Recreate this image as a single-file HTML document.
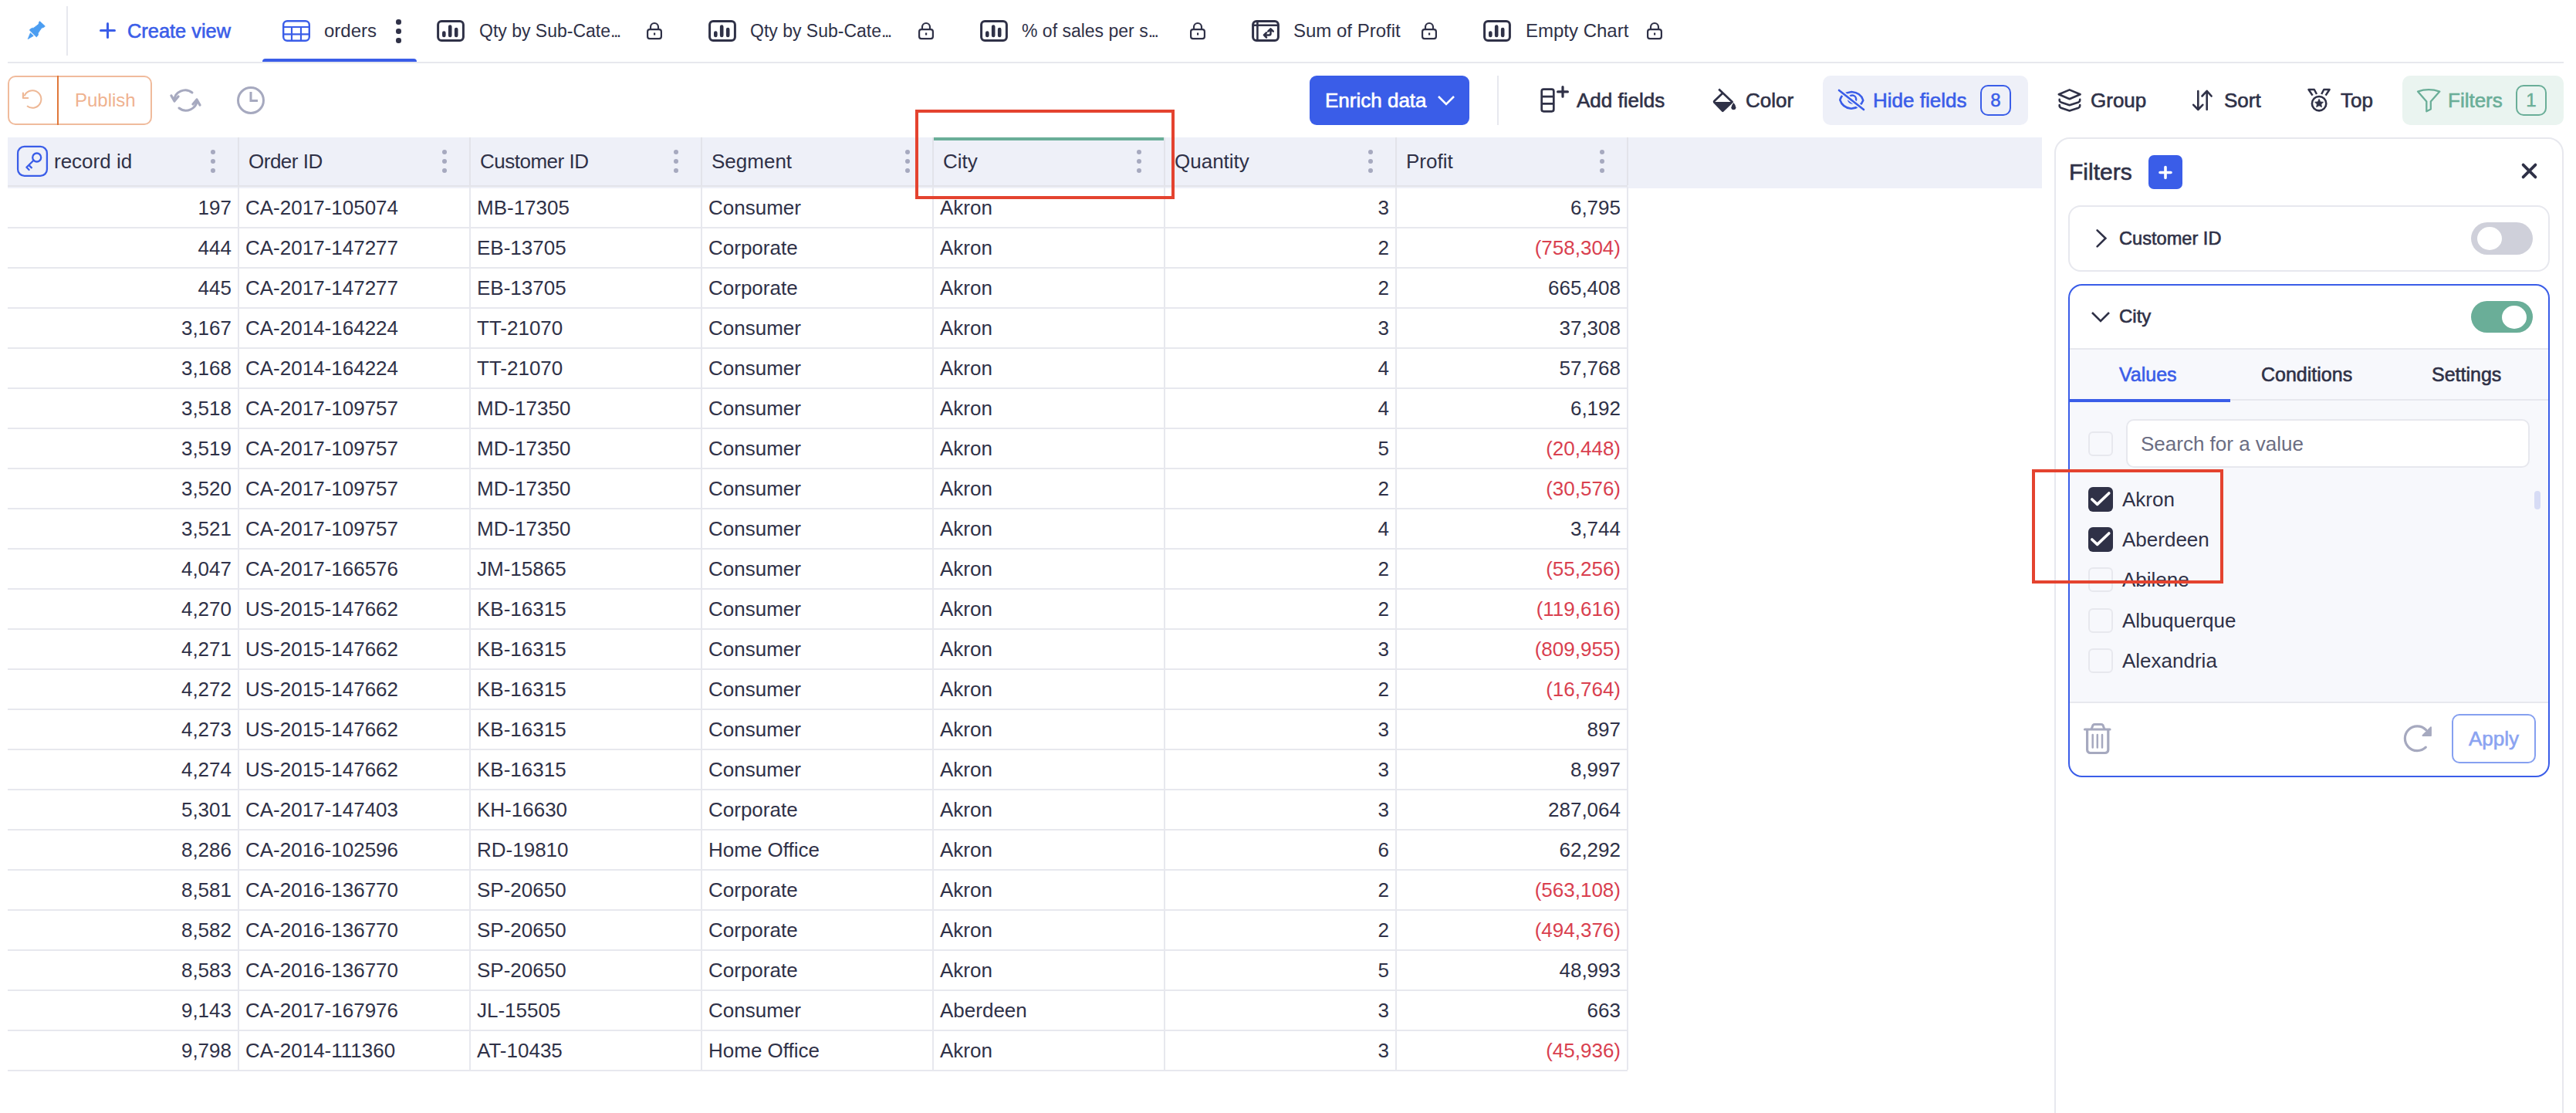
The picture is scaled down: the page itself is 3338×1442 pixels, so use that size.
<!DOCTYPE html>
<html><head><meta charset="utf-8"><title>orders</title><style>
*{margin:0;padding:0;box-sizing:border-box}
html,body{width:3338px;height:1442px;overflow:hidden;background:#fff;font-family:"Liberation Sans",sans-serif;color:#2f3147}
.a{position:absolute}
.t{position:absolute;white-space:nowrap;line-height:40px}
.med{-webkit-text-stroke:0.6px currentColor}
.hl{position:absolute;background:#e7e8ee}
.cell{position:absolute;white-space:nowrap;font-size:26px;line-height:52px;height:52px}
.r{text-align:right}
.dots{position:absolute;width:6px}
.dots i{position:absolute;left:0;width:6px;height:6px;border-radius:50%;background:#a6a9bf}
</style></head>
<body>
<svg class="a" style="left:25px;top:20px" width="45" height="40" viewBox="25 20 45 40">
<path d="M51.6 27.7 L58.3 33.85 Q57.5 35.5 55.6 35.8 Q53.8 36.2 53.4 36.9 L49.8 42.3 Q49 44 49.5 45.2 L47.3 47.9 L38.3 39.1 Q39.5 37.2 40.5 36.9 Q42.5 36 43.7 36.2 L49.8 31.5 Q50.8 30 50.5 28.6 Z" fill="#4b9df1" stroke="#4b9df1" stroke-width="0.8" stroke-linejoin="round"/>
<path d="M39.4 42.7 L43.3 46.4 L36.2 50.6 Z" fill="#4b9df1" stroke="#4b9df1" stroke-width="0.8" stroke-linejoin="round"/></svg>
<div class="a" style="left:86px;top:8px;width:2px;height:64px;background:#e7e8ee"></div>
<div class="a" style="left:129px;top:38px;width:21px;height:3px;background:#3a5de8;border-radius:2px"></div>
<div class="a" style="left:138px;top:29px;width:3px;height:21px;background:#3a5de8;border-radius:2px"></div>
<div class="t med" style="left:165px;top:20px;font-size:25.4px;color:#3a5de8">Create view</div>
<svg class="a" style="left:366px;top:26px" width="36" height="28" viewBox="0 0 36 28">
<rect x="1.2" y="1.2" width="33.6" height="25.6" rx="5" fill="none" stroke="#3a5de8" stroke-width="2.4"/>
<path d="M1.2 9 H34.8 M1.2 18.4 H34.8 M12 9 V27 M24 9 V27" stroke="#3a5de8" stroke-width="2.2"/></svg>
<div class="t" style="left:420px;top:20px;font-size:24px">orders</div>
<div class="a" style="left:513px;top:25px;width:7px;height:30px"><i class="a" style="left:0;top:0;width:6.5px;height:6.5px;border-radius:50%;background:#2f3147"></i><i class="a" style="left:0;top:12px;width:6.5px;height:6.5px;border-radius:50%;background:#2f3147"></i><i class="a" style="left:0;top:24px;width:6.5px;height:6.5px;border-radius:50%;background:#2f3147"></i></div>
<div class="a" style="left:340px;top:76px;width:200px;height:5px;background:#3a5de8;border-radius:4px 4px 0 0"></div>
<svg class="a" style="left:565px;top:25px" width="38" height="30" viewBox="0 0 38 30"><rect x="2.6" y="2.6" width="32.8" height="25" rx="4.5" fill="none" stroke="#2f3147" stroke-width="3"/><path d="M10.3 17.5 V21 M18.2 9.5 V21 M26.2 13 V21" stroke="#2f3147" stroke-width="4.6" stroke-linecap="round"/></svg>
<div class="t" style="left:621px;top:20px;font-size:23px">Qty by Sub-Cate<span style="letter-spacing:-2.5px">...</span></div>
<svg class="a" style="left:837px;top:28px" width="22" height="24" viewBox="0 0 22 24"><path d="M6 10 V7 a5 5 0 0 1 10 0 V10" fill="none" stroke="#2f3147" stroke-width="2.2"/><rect x="2.1" y="10.1" width="17.8" height="12" rx="2.8" fill="none" stroke="#2f3147" stroke-width="2.2"/><rect x="10" y="14.5" width="2.2" height="3" fill="#2f3147"/></svg>
<svg class="a" style="left:917px;top:25px" width="38" height="30" viewBox="0 0 38 30"><rect x="2.6" y="2.6" width="32.8" height="25" rx="4.5" fill="none" stroke="#2f3147" stroke-width="3"/><path d="M10.3 17.5 V21 M18.2 9.5 V21 M26.2 13 V21" stroke="#2f3147" stroke-width="4.6" stroke-linecap="round"/></svg>
<div class="t" style="left:972px;top:20px;font-size:23px">Qty by Sub-Cate<span style="letter-spacing:-2.5px">...</span></div>
<svg class="a" style="left:1189px;top:28px" width="22" height="24" viewBox="0 0 22 24"><path d="M6 10 V7 a5 5 0 0 1 10 0 V10" fill="none" stroke="#2f3147" stroke-width="2.2"/><rect x="2.1" y="10.1" width="17.8" height="12" rx="2.8" fill="none" stroke="#2f3147" stroke-width="2.2"/><rect x="10" y="14.5" width="2.2" height="3" fill="#2f3147"/></svg>
<svg class="a" style="left:1269px;top:25px" width="38" height="30" viewBox="0 0 38 30"><rect x="2.6" y="2.6" width="32.8" height="25" rx="4.5" fill="none" stroke="#2f3147" stroke-width="3"/><path d="M10.3 17.5 V21 M18.2 9.5 V21 M26.2 13 V21" stroke="#2f3147" stroke-width="4.6" stroke-linecap="round"/></svg>
<div class="t" style="left:1324px;top:20px;font-size:23px">% of sales per s<span style="letter-spacing:-2.5px">...</span></div>
<svg class="a" style="left:1541px;top:28px" width="22" height="24" viewBox="0 0 22 24"><path d="M6 10 V7 a5 5 0 0 1 10 0 V10" fill="none" stroke="#2f3147" stroke-width="2.2"/><rect x="2.1" y="10.1" width="17.8" height="12" rx="2.8" fill="none" stroke="#2f3147" stroke-width="2.2"/><rect x="10" y="14.5" width="2.2" height="3" fill="#2f3147"/></svg>
<svg class="a" style="left:1621px;top:25px" width="38" height="30" viewBox="0 0 38 30"><rect x="2.6" y="2.6" width="32.8" height="25" rx="4.5" fill="none" stroke="#2f3147" stroke-width="3"/><path d="M2.6 7.8 H35.4 M8.4 2.6 V27.6" stroke="#2f3147" stroke-width="2.6"/><path d="M25.5 12.8 V18.4 Q25.5 20.4 23.5 20.4 H17.2 M22.2 15.6 L25.5 12.3 L28.8 15.6 M20 17.3 L16.9 20.4 L20 23.5" stroke="#2f3147" stroke-width="2.5" fill="none" stroke-linecap="round" stroke-linejoin="round"/></svg>
<div class="t" style="left:1676px;top:20px;font-size:24px">Sum of Profit</div>
<svg class="a" style="left:1841px;top:28px" width="22" height="24" viewBox="0 0 22 24"><path d="M6 10 V7 a5 5 0 0 1 10 0 V10" fill="none" stroke="#2f3147" stroke-width="2.2"/><rect x="2.1" y="10.1" width="17.8" height="12" rx="2.8" fill="none" stroke="#2f3147" stroke-width="2.2"/><rect x="10" y="14.5" width="2.2" height="3" fill="#2f3147"/></svg>
<svg class="a" style="left:1921px;top:25px" width="38" height="30" viewBox="0 0 38 30"><rect x="2.6" y="2.6" width="32.8" height="25" rx="4.5" fill="none" stroke="#2f3147" stroke-width="3"/><path d="M10.3 17.5 V21 M18.2 9.5 V21 M26.2 13 V21" stroke="#2f3147" stroke-width="4.6" stroke-linecap="round"/></svg>
<div class="t" style="left:1977px;top:20px;font-size:24px">Empty Chart</div>
<svg class="a" style="left:2133px;top:28px" width="22" height="24" viewBox="0 0 22 24"><path d="M6 10 V7 a5 5 0 0 1 10 0 V10" fill="none" stroke="#2f3147" stroke-width="2.2"/><rect x="2.1" y="10.1" width="17.8" height="12" rx="2.8" fill="none" stroke="#2f3147" stroke-width="2.2"/><rect x="10" y="14.5" width="2.2" height="3" fill="#2f3147"/></svg>
<div class="a" style="left:10px;top:80px;width:3312px;height:2px;background:#e7e8ee"></div>
<div class="a" style="left:10px;top:98px;width:187px;height:64px;border:2px solid #f0bb9c;border-radius:10px"></div>
<div class="a" style="left:74px;top:98px;width:2px;height:64px;background:#e0783a"></div>
<svg class="a" style="left:20px;top:105px" width="50" height="50" viewBox="20 105 50 50">
<path d="M35 137.3 A11.3 11.3 0 1 0 31.5 124.5" fill="none" stroke="#eeb896" stroke-width="2"/>
<path d="M29.9 120.6 V127 H36.2" fill="none" stroke="#eeb896" stroke-width="2.2" stroke-linecap="round" stroke-linejoin="round"/></svg>
<div class="t" style="left:97px;top:110px;font-size:24px;color:#efb28f">Publish</div>
<svg class="a" style="left:220px;top:112px" width="42" height="36" viewBox="0 0 42 36">
<path d="M6 18 A14 13 0 0 1 29 8" fill="none" stroke="#a6a9bf" stroke-width="3" stroke-linecap="round"/>
<path d="M2 12 L6 19 L11 13" fill="none" stroke="#a6a9bf" stroke-width="3.2" stroke-linecap="round" stroke-linejoin="round"/>
<path d="M35 18 A14 13 0 0 1 12 28" fill="none" stroke="#a6a9bf" stroke-width="3" stroke-linecap="round"/>
<path d="M39 24 L35 17 L30 23" fill="none" stroke="#a6a9bf" stroke-width="3.2" stroke-linecap="round" stroke-linejoin="round"/></svg>
<svg class="a" style="left:306px;top:111px" width="38" height="38" viewBox="0 0 38 38">
<circle cx="19" cy="19" r="16.5" fill="none" stroke="#a6a9bf" stroke-width="3"/>
<path d="M19 8 V19.5 H28" fill="none" stroke="#a6a9bf" stroke-width="3"/></svg>
<div class="a" style="left:1697px;top:98px;width:207px;height:64px;background:#3a5de8;border-radius:9px"></div>
<div class="t med" style="left:1717px;top:110px;font-size:26px;color:#fff">Enrich data</div>
<svg class="a" style="left:1862px;top:122px" width="24" height="16" viewBox="0 0 24 16">
<path d="M2 3 L12 13 L22 3" fill="none" stroke="#fff" stroke-width="2.6"/></svg>
<div class="a" style="left:1940px;top:98px;width:2px;height:64px;background:#e7e8ee"></div>
<svg class="a" style="left:1990px;top:105px" width="50" height="50" viewBox="1990 105 50 50">
<rect x="1997.7" y="115.6" width="15.6" height="28.7" rx="2.5" fill="none" stroke="#2f3147" stroke-width="2.7"/>
<path d="M1997.7 125.2 H2013.3 M1997.7 134.4 H2013.3" stroke="#2f3147" stroke-width="2.7"/>
<path d="M2025 112.6 V125.2 M2018.6 118.9 H2031.4" stroke="#2f3147" stroke-width="3.2" stroke-linecap="round"/></svg>
<div class="t med" style="left:2043px;top:110px;font-size:26px">Add fields</div>
<svg class="a" style="left:2210px;top:105px" width="50" height="50" viewBox="2210 105 50 50">
<path d="M2227.2 115.6 L2244.6 132 L2232.3 143.8 L2221.2 132.4 Q2220.8 131.6 2221.6 130.8 L2231.6 121.2" fill="none" stroke="#2f3147" stroke-width="2.7" stroke-linejoin="round"/>
<path d="M2222 132 H2244 L2232.3 143.5 Z" fill="#2f3147"/>
<path d="M2246.4 133 Q2243.4 136.6 2243.4 139.2 a3 3 0 0 0 6 0 Q2249.4 136.6 2246.4 133Z" fill="#2f3147"/></svg>
<div class="t med" style="left:2262px;top:110px;font-size:26px">Color</div>
<div class="a" style="left:2362px;top:98px;width:266px;height:64px;background:#eef0f8;border-radius:10px"></div>
<svg class="a" style="left:2375px;top:108px" width="50" height="44" viewBox="2375 108 50 44">
<path d="M2384.3 129.5 Q2386 121 2399.3 119 Q2411.5 120 2414.3 130 Q2411 139.5 2398.8 140.8 Q2387.5 139.5 2384.3 129.5 Z" fill="none" stroke="#3a5de8" stroke-width="2.5"/>
<circle cx="2400.2" cy="128.6" r="5" fill="none" stroke="#3a5de8" stroke-width="2.5"/>
<path d="M2383 117 L2415 142" stroke="#eef0f8" stroke-width="6"/>
<path d="M2383 117 L2415 142" stroke="#3a5de8" stroke-width="2.6" stroke-linecap="round"/></svg>
<div class="t med" style="left:2427px;top:110px;font-size:26px;color:#3a5de8">Hide fields</div>
<div class="a" style="left:2566px;top:110px;width:40px;height:40px;border:2px solid #3a5de8;border-radius:10px;color:#3a5de8;font-size:24px;line-height:36px;text-align:center;-webkit-text-stroke:0.5px #3a5de8">8</div>
<svg class="a" style="left:2660px;top:108px" width="45" height="44" viewBox="2660 108 45 44">
<path d="M2681.7 116.4 L2695.6 122.2 L2681.7 128.3 L2667.8 122.2 Z" fill="none" stroke="#2f3147" stroke-width="2.6" stroke-linejoin="round"/>
<path d="M2668.7 128.8 Q2668.4 131.4 2670.6 132.4 L2681.7 136.2 L2693.4 132.4 Q2695.4 131.4 2695.2 128.8 M2668.7 136.1 Q2668.4 138.7 2670.6 139.7 L2681.7 143.5 L2693.4 139.7 Q2695.4 138.7 2695.2 136.1" fill="none" stroke="#2f3147" stroke-width="2.6" stroke-linecap="round" stroke-linejoin="round"/></svg>
<div class="t med" style="left:2709px;top:110px;font-size:26px">Group</div>
<svg class="a" style="left:2835px;top:108px" width="40" height="44" viewBox="2835 108 40 44">
<path d="M2848.3 118 V141.5 M2842.2 135.8 L2848.3 142 L2854.3 135.8" fill="none" stroke="#2f3147" stroke-width="2.6" stroke-linecap="round" stroke-linejoin="round"/>
<path d="M2859.7 142 V118 M2853.5 124.5 L2859.7 117.8 L2865.6 124.5" fill="none" stroke="#2f3147" stroke-width="2.6" stroke-linecap="round" stroke-linejoin="round"/></svg>
<div class="t med" style="left:2882px;top:110px;font-size:26px">Sort</div>
<svg class="a" style="left:2985px;top:108px" width="40" height="44" viewBox="2985 108 40 44">
<path d="M2996.6 123.6 L2991.5 116 H2998.8 L3002 122 M3013.6 123.6 L3018.6 116 H3011.3 L3008.2 122" fill="none" stroke="#2f3147" stroke-width="2.5" stroke-linejoin="round"/>
<circle cx="3005.1" cy="134.2" r="9.2" fill="none" stroke="#2f3147" stroke-width="2.6"/>
<path d="M3005.1 128.3 L3006.8 131.9 L3010.6 132.3 L3007.8 134.9 L3008.5 138.7 L3005.1 136.8 L3001.7 138.7 L3002.4 134.9 L2999.6 132.3 L3003.4 131.9 Z" fill="#2f3147" stroke="#2f3147" stroke-width="0.8" stroke-linejoin="round"/></svg>
<div class="t med" style="left:3033px;top:110px;font-size:26px">Top</div>
<div class="a" style="left:3113px;top:98px;width:209px;height:64px;background:#eaf4f0;border-radius:10px"></div>
<svg class="a" style="left:3120px;top:105px" width="50" height="50" viewBox="3120 105 50 50">
<path d="M3133 118.6 Q3147 113.8 3161.3 118.6 L3149.8 131.6 V141.5 L3144.3 144.2 V131.6 Z" fill="none" stroke="#6aae98" stroke-width="2.3" stroke-linejoin="round"/></svg>
<div class="t med" style="left:3172px;top:110px;font-size:26px;color:#6aae98">Filters</div>
<div class="a" style="left:3260px;top:110px;width:40px;height:40px;border:2px solid #6aae98;border-radius:10px;color:#6aae98;font-size:24px;line-height:36px;text-align:center;-webkit-text-stroke:0.5px #6aae98">1</div>
<div class="a" style="left:10px;top:178px;width:2636px;height:66px;background:#eef0f8"></div>
<div class="a" style="left:10px;top:240px;width:2099px;height:2px;background:#e3e4ea"></div>
<div class="t" style="left:70px;top:189px;font-size:26px;">record id</div>
<div class="dots" style="left:273px;top:194px;height:32px"><i style="top:0"></i><i style="top:12px"></i><i style="top:24px"></i></div>
<div class="a" style="left:308px;top:178px;width:2px;height:62px;background:#e2e3ea"></div>
<div class="t" style="left:322px;top:189px;font-size:26px;letter-spacing:-0.5px;">Order ID</div>
<div class="dots" style="left:573px;top:194px;height:32px"><i style="top:0"></i><i style="top:12px"></i><i style="top:24px"></i></div>
<div class="a" style="left:608px;top:178px;width:2px;height:62px;background:#e2e3ea"></div>
<div class="t" style="left:622px;top:189px;font-size:26px;letter-spacing:-0.5px;">Customer ID</div>
<div class="dots" style="left:873px;top:194px;height:32px"><i style="top:0"></i><i style="top:12px"></i><i style="top:24px"></i></div>
<div class="a" style="left:908px;top:178px;width:2px;height:62px;background:#e2e3ea"></div>
<div class="t" style="left:922px;top:189px;font-size:26px;">Segment</div>
<div class="dots" style="left:1173px;top:194px;height:32px"><i style="top:0"></i><i style="top:12px"></i><i style="top:24px"></i></div>
<div class="a" style="left:1208px;top:178px;width:2px;height:62px;background:#e2e3ea"></div>
<div class="t" style="left:1222px;top:189px;font-size:26px;">City</div>
<div class="dots" style="left:1473px;top:194px;height:32px"><i style="top:0"></i><i style="top:12px"></i><i style="top:24px"></i></div>
<div class="a" style="left:1508px;top:178px;width:2px;height:62px;background:#e2e3ea"></div>
<div class="t" style="left:1522px;top:189px;font-size:26px;">Quantity</div>
<div class="dots" style="left:1773px;top:194px;height:32px"><i style="top:0"></i><i style="top:12px"></i><i style="top:24px"></i></div>
<div class="a" style="left:1808px;top:178px;width:2px;height:62px;background:#e2e3ea"></div>
<div class="t" style="left:1822px;top:189px;font-size:26px;">Profit</div>
<div class="dots" style="left:2073px;top:194px;height:32px"><i style="top:0"></i><i style="top:12px"></i><i style="top:24px"></i></div>
<div class="a" style="left:2108px;top:178px;width:2px;height:62px;background:#e2e3ea"></div>
<svg class="a" style="left:18px;top:185px" width="48" height="48" viewBox="18 185 48 48">
<rect x="23.1" y="189.9" width="37.8" height="38" rx="8.5" fill="none" stroke="#3a5de8" stroke-width="2.3"/>
<circle cx="47.7" cy="204" r="5.5" fill="none" stroke="#3a5de8" stroke-width="2.3"/>
<path d="M43.6 207.8 L34.4 216.8 L37.6 220 M37.8 214.3 L40.9 217.3" fill="none" stroke="#3a5de8" stroke-width="2.3" stroke-linecap="round" stroke-linejoin="round"/></svg>
<div class="a" style="left:1210px;top:178px;width:298px;height:4px;background:#6aae98"></div>
<div class="cell r" style="left:10px;top:243px;width:290px;color:#2f3147">197</div>
<div class="cell" style="left:318px;top:243px">CA-2017-105074</div>
<div class="cell" style="left:618px;top:243px">MB-17305</div>
<div class="cell" style="left:918px;top:243px">Consumer</div>
<div class="cell" style="left:1218px;top:243px">Akron</div>
<div class="cell r" style="left:1510px;top:243px;width:290px;color:#2f3147">3</div>
<div class="cell r" style="left:1810px;top:243px;width:290px;color:#2f3147">6,795</div>
<div class="a" style="left:10px;top:294px;width:2099px;height:2px;background:#e7e8ee"></div>
<div class="cell r" style="left:10px;top:295px;width:290px;color:#2f3147">444</div>
<div class="cell" style="left:318px;top:295px">CA-2017-147277</div>
<div class="cell" style="left:618px;top:295px">EB-13705</div>
<div class="cell" style="left:918px;top:295px">Corporate</div>
<div class="cell" style="left:1218px;top:295px">Akron</div>
<div class="cell r" style="left:1510px;top:295px;width:290px;color:#2f3147">2</div>
<div class="cell r" style="left:1810px;top:295px;width:290px;color:#d9404f">(758,304)</div>
<div class="a" style="left:10px;top:346px;width:2099px;height:2px;background:#e7e8ee"></div>
<div class="cell r" style="left:10px;top:347px;width:290px;color:#2f3147">445</div>
<div class="cell" style="left:318px;top:347px">CA-2017-147277</div>
<div class="cell" style="left:618px;top:347px">EB-13705</div>
<div class="cell" style="left:918px;top:347px">Corporate</div>
<div class="cell" style="left:1218px;top:347px">Akron</div>
<div class="cell r" style="left:1510px;top:347px;width:290px;color:#2f3147">2</div>
<div class="cell r" style="left:1810px;top:347px;width:290px;color:#2f3147">665,408</div>
<div class="a" style="left:10px;top:398px;width:2099px;height:2px;background:#e7e8ee"></div>
<div class="cell r" style="left:10px;top:399px;width:290px;color:#2f3147">3,167</div>
<div class="cell" style="left:318px;top:399px">CA-2014-164224</div>
<div class="cell" style="left:618px;top:399px">TT-21070</div>
<div class="cell" style="left:918px;top:399px">Consumer</div>
<div class="cell" style="left:1218px;top:399px">Akron</div>
<div class="cell r" style="left:1510px;top:399px;width:290px;color:#2f3147">3</div>
<div class="cell r" style="left:1810px;top:399px;width:290px;color:#2f3147">37,308</div>
<div class="a" style="left:10px;top:450px;width:2099px;height:2px;background:#e7e8ee"></div>
<div class="cell r" style="left:10px;top:451px;width:290px;color:#2f3147">3,168</div>
<div class="cell" style="left:318px;top:451px">CA-2014-164224</div>
<div class="cell" style="left:618px;top:451px">TT-21070</div>
<div class="cell" style="left:918px;top:451px">Consumer</div>
<div class="cell" style="left:1218px;top:451px">Akron</div>
<div class="cell r" style="left:1510px;top:451px;width:290px;color:#2f3147">4</div>
<div class="cell r" style="left:1810px;top:451px;width:290px;color:#2f3147">57,768</div>
<div class="a" style="left:10px;top:502px;width:2099px;height:2px;background:#e7e8ee"></div>
<div class="cell r" style="left:10px;top:503px;width:290px;color:#2f3147">3,518</div>
<div class="cell" style="left:318px;top:503px">CA-2017-109757</div>
<div class="cell" style="left:618px;top:503px">MD-17350</div>
<div class="cell" style="left:918px;top:503px">Consumer</div>
<div class="cell" style="left:1218px;top:503px">Akron</div>
<div class="cell r" style="left:1510px;top:503px;width:290px;color:#2f3147">4</div>
<div class="cell r" style="left:1810px;top:503px;width:290px;color:#2f3147">6,192</div>
<div class="a" style="left:10px;top:554px;width:2099px;height:2px;background:#e7e8ee"></div>
<div class="cell r" style="left:10px;top:555px;width:290px;color:#2f3147">3,519</div>
<div class="cell" style="left:318px;top:555px">CA-2017-109757</div>
<div class="cell" style="left:618px;top:555px">MD-17350</div>
<div class="cell" style="left:918px;top:555px">Consumer</div>
<div class="cell" style="left:1218px;top:555px">Akron</div>
<div class="cell r" style="left:1510px;top:555px;width:290px;color:#2f3147">5</div>
<div class="cell r" style="left:1810px;top:555px;width:290px;color:#d9404f">(20,448)</div>
<div class="a" style="left:10px;top:606px;width:2099px;height:2px;background:#e7e8ee"></div>
<div class="cell r" style="left:10px;top:607px;width:290px;color:#2f3147">3,520</div>
<div class="cell" style="left:318px;top:607px">CA-2017-109757</div>
<div class="cell" style="left:618px;top:607px">MD-17350</div>
<div class="cell" style="left:918px;top:607px">Consumer</div>
<div class="cell" style="left:1218px;top:607px">Akron</div>
<div class="cell r" style="left:1510px;top:607px;width:290px;color:#2f3147">2</div>
<div class="cell r" style="left:1810px;top:607px;width:290px;color:#d9404f">(30,576)</div>
<div class="a" style="left:10px;top:658px;width:2099px;height:2px;background:#e7e8ee"></div>
<div class="cell r" style="left:10px;top:659px;width:290px;color:#2f3147">3,521</div>
<div class="cell" style="left:318px;top:659px">CA-2017-109757</div>
<div class="cell" style="left:618px;top:659px">MD-17350</div>
<div class="cell" style="left:918px;top:659px">Consumer</div>
<div class="cell" style="left:1218px;top:659px">Akron</div>
<div class="cell r" style="left:1510px;top:659px;width:290px;color:#2f3147">4</div>
<div class="cell r" style="left:1810px;top:659px;width:290px;color:#2f3147">3,744</div>
<div class="a" style="left:10px;top:710px;width:2099px;height:2px;background:#e7e8ee"></div>
<div class="cell r" style="left:10px;top:711px;width:290px;color:#2f3147">4,047</div>
<div class="cell" style="left:318px;top:711px">CA-2017-166576</div>
<div class="cell" style="left:618px;top:711px">JM-15865</div>
<div class="cell" style="left:918px;top:711px">Consumer</div>
<div class="cell" style="left:1218px;top:711px">Akron</div>
<div class="cell r" style="left:1510px;top:711px;width:290px;color:#2f3147">2</div>
<div class="cell r" style="left:1810px;top:711px;width:290px;color:#d9404f">(55,256)</div>
<div class="a" style="left:10px;top:762px;width:2099px;height:2px;background:#e7e8ee"></div>
<div class="cell r" style="left:10px;top:763px;width:290px;color:#2f3147">4,270</div>
<div class="cell" style="left:318px;top:763px">US-2015-147662</div>
<div class="cell" style="left:618px;top:763px">KB-16315</div>
<div class="cell" style="left:918px;top:763px">Consumer</div>
<div class="cell" style="left:1218px;top:763px">Akron</div>
<div class="cell r" style="left:1510px;top:763px;width:290px;color:#2f3147">2</div>
<div class="cell r" style="left:1810px;top:763px;width:290px;color:#d9404f">(119,616)</div>
<div class="a" style="left:10px;top:814px;width:2099px;height:2px;background:#e7e8ee"></div>
<div class="cell r" style="left:10px;top:815px;width:290px;color:#2f3147">4,271</div>
<div class="cell" style="left:318px;top:815px">US-2015-147662</div>
<div class="cell" style="left:618px;top:815px">KB-16315</div>
<div class="cell" style="left:918px;top:815px">Consumer</div>
<div class="cell" style="left:1218px;top:815px">Akron</div>
<div class="cell r" style="left:1510px;top:815px;width:290px;color:#2f3147">3</div>
<div class="cell r" style="left:1810px;top:815px;width:290px;color:#d9404f">(809,955)</div>
<div class="a" style="left:10px;top:866px;width:2099px;height:2px;background:#e7e8ee"></div>
<div class="cell r" style="left:10px;top:867px;width:290px;color:#2f3147">4,272</div>
<div class="cell" style="left:318px;top:867px">US-2015-147662</div>
<div class="cell" style="left:618px;top:867px">KB-16315</div>
<div class="cell" style="left:918px;top:867px">Consumer</div>
<div class="cell" style="left:1218px;top:867px">Akron</div>
<div class="cell r" style="left:1510px;top:867px;width:290px;color:#2f3147">2</div>
<div class="cell r" style="left:1810px;top:867px;width:290px;color:#d9404f">(16,764)</div>
<div class="a" style="left:10px;top:918px;width:2099px;height:2px;background:#e7e8ee"></div>
<div class="cell r" style="left:10px;top:919px;width:290px;color:#2f3147">4,273</div>
<div class="cell" style="left:318px;top:919px">US-2015-147662</div>
<div class="cell" style="left:618px;top:919px">KB-16315</div>
<div class="cell" style="left:918px;top:919px">Consumer</div>
<div class="cell" style="left:1218px;top:919px">Akron</div>
<div class="cell r" style="left:1510px;top:919px;width:290px;color:#2f3147">3</div>
<div class="cell r" style="left:1810px;top:919px;width:290px;color:#2f3147">897</div>
<div class="a" style="left:10px;top:970px;width:2099px;height:2px;background:#e7e8ee"></div>
<div class="cell r" style="left:10px;top:971px;width:290px;color:#2f3147">4,274</div>
<div class="cell" style="left:318px;top:971px">US-2015-147662</div>
<div class="cell" style="left:618px;top:971px">KB-16315</div>
<div class="cell" style="left:918px;top:971px">Consumer</div>
<div class="cell" style="left:1218px;top:971px">Akron</div>
<div class="cell r" style="left:1510px;top:971px;width:290px;color:#2f3147">3</div>
<div class="cell r" style="left:1810px;top:971px;width:290px;color:#2f3147">8,997</div>
<div class="a" style="left:10px;top:1022px;width:2099px;height:2px;background:#e7e8ee"></div>
<div class="cell r" style="left:10px;top:1023px;width:290px;color:#2f3147">5,301</div>
<div class="cell" style="left:318px;top:1023px">CA-2017-147403</div>
<div class="cell" style="left:618px;top:1023px">KH-16630</div>
<div class="cell" style="left:918px;top:1023px">Corporate</div>
<div class="cell" style="left:1218px;top:1023px">Akron</div>
<div class="cell r" style="left:1510px;top:1023px;width:290px;color:#2f3147">3</div>
<div class="cell r" style="left:1810px;top:1023px;width:290px;color:#2f3147">287,064</div>
<div class="a" style="left:10px;top:1074px;width:2099px;height:2px;background:#e7e8ee"></div>
<div class="cell r" style="left:10px;top:1075px;width:290px;color:#2f3147">8,286</div>
<div class="cell" style="left:318px;top:1075px">CA-2016-102596</div>
<div class="cell" style="left:618px;top:1075px">RD-19810</div>
<div class="cell" style="left:918px;top:1075px">Home Office</div>
<div class="cell" style="left:1218px;top:1075px">Akron</div>
<div class="cell r" style="left:1510px;top:1075px;width:290px;color:#2f3147">6</div>
<div class="cell r" style="left:1810px;top:1075px;width:290px;color:#2f3147">62,292</div>
<div class="a" style="left:10px;top:1126px;width:2099px;height:2px;background:#e7e8ee"></div>
<div class="cell r" style="left:10px;top:1127px;width:290px;color:#2f3147">8,581</div>
<div class="cell" style="left:318px;top:1127px">CA-2016-136770</div>
<div class="cell" style="left:618px;top:1127px">SP-20650</div>
<div class="cell" style="left:918px;top:1127px">Corporate</div>
<div class="cell" style="left:1218px;top:1127px">Akron</div>
<div class="cell r" style="left:1510px;top:1127px;width:290px;color:#2f3147">2</div>
<div class="cell r" style="left:1810px;top:1127px;width:290px;color:#d9404f">(563,108)</div>
<div class="a" style="left:10px;top:1178px;width:2099px;height:2px;background:#e7e8ee"></div>
<div class="cell r" style="left:10px;top:1179px;width:290px;color:#2f3147">8,582</div>
<div class="cell" style="left:318px;top:1179px">CA-2016-136770</div>
<div class="cell" style="left:618px;top:1179px">SP-20650</div>
<div class="cell" style="left:918px;top:1179px">Corporate</div>
<div class="cell" style="left:1218px;top:1179px">Akron</div>
<div class="cell r" style="left:1510px;top:1179px;width:290px;color:#2f3147">2</div>
<div class="cell r" style="left:1810px;top:1179px;width:290px;color:#d9404f">(494,376)</div>
<div class="a" style="left:10px;top:1230px;width:2099px;height:2px;background:#e7e8ee"></div>
<div class="cell r" style="left:10px;top:1231px;width:290px;color:#2f3147">8,583</div>
<div class="cell" style="left:318px;top:1231px">CA-2016-136770</div>
<div class="cell" style="left:618px;top:1231px">SP-20650</div>
<div class="cell" style="left:918px;top:1231px">Corporate</div>
<div class="cell" style="left:1218px;top:1231px">Akron</div>
<div class="cell r" style="left:1510px;top:1231px;width:290px;color:#2f3147">5</div>
<div class="cell r" style="left:1810px;top:1231px;width:290px;color:#2f3147">48,993</div>
<div class="a" style="left:10px;top:1282px;width:2099px;height:2px;background:#e7e8ee"></div>
<div class="cell r" style="left:10px;top:1283px;width:290px;color:#2f3147">9,143</div>
<div class="cell" style="left:318px;top:1283px">CA-2017-167976</div>
<div class="cell" style="left:618px;top:1283px">JL-15505</div>
<div class="cell" style="left:918px;top:1283px">Consumer</div>
<div class="cell" style="left:1218px;top:1283px">Aberdeen</div>
<div class="cell r" style="left:1510px;top:1283px;width:290px;color:#2f3147">3</div>
<div class="cell r" style="left:1810px;top:1283px;width:290px;color:#2f3147">663</div>
<div class="a" style="left:10px;top:1334px;width:2099px;height:2px;background:#e7e8ee"></div>
<div class="cell r" style="left:10px;top:1335px;width:290px;color:#2f3147">9,798</div>
<div class="cell" style="left:318px;top:1335px">CA-2014-111360</div>
<div class="cell" style="left:618px;top:1335px">AT-10435</div>
<div class="cell" style="left:918px;top:1335px">Home Office</div>
<div class="cell" style="left:1218px;top:1335px">Akron</div>
<div class="cell r" style="left:1510px;top:1335px;width:290px;color:#2f3147">3</div>
<div class="cell r" style="left:1810px;top:1335px;width:290px;color:#d9404f">(45,936)</div>
<div class="a" style="left:10px;top:1386px;width:2099px;height:2px;background:#e7e8ee"></div>
<div class="a" style="left:308px;top:242px;width:2px;height:1144px;background:#e7e8ee"></div>
<div class="a" style="left:608px;top:242px;width:2px;height:1144px;background:#e7e8ee"></div>
<div class="a" style="left:908px;top:242px;width:2px;height:1144px;background:#e7e8ee"></div>
<div class="a" style="left:1208px;top:242px;width:2px;height:1144px;background:#e7e8ee"></div>
<div class="a" style="left:1508px;top:242px;width:2px;height:1144px;background:#e7e8ee"></div>
<div class="a" style="left:1808px;top:242px;width:2px;height:1144px;background:#e7e8ee"></div>
<div class="a" style="left:2108px;top:242px;width:2px;height:1144px;background:#e7e8ee"></div>
<div class="a" style="left:1186px;top:142px;width:336px;height:116px;border:4px solid #e4432f"></div>
<div class="a" style="left:2662px;top:178px;width:660px;height:1300px;border:2px solid #e7e8ee;border-radius:20px"></div>
<div class="t med" style="left:2681px;top:203px;font-size:30px">Filters</div>
<div class="a" style="left:2784px;top:201px;width:44px;height:44px;background:#3a5de8;border-radius:7px"></div>
<svg class="a" style="left:2784px;top:201px" width="44" height="44" viewBox="2784 201 44 44"><path d="M2806 216.5 V230.5 M2799 223.5 H2813" stroke="#fff" stroke-width="3.6" stroke-linecap="round"/></svg>
<svg class="a" style="left:3260px;top:205px" width="35" height="35" viewBox="3260 205 35 35">
<path d="M3269.6 213.6 L3285.4 229.4 M3285.4 213.6 L3269.6 229.4" stroke="#2f3147" stroke-width="3.8" stroke-linecap="round"/></svg>
<div class="a" style="left:2680px;top:266px;width:624px;height:86px;border:2px solid #e7e8ee;border-radius:16px"></div>
<svg class="a" style="left:2712px;top:295px" width="22" height="28" viewBox="0 0 22 28">
<path d="M5.6 3.4 L16.4 13.8 L5.6 24.4" fill="none" stroke="#2f3147" stroke-width="2.6" stroke-linecap="round"/></svg>
<div class="t med" style="left:2746px;top:289px;font-size:23.6px">Customer ID</div>
<div class="a" style="left:3202px;top:288px;width:80px;height:42px;background:#cfd0da;border-radius:21px"></div>
<div class="a" style="left:3210px;top:294px;width:32px;height:30px;background:#fff;border-radius:50%"></div>
<div class="a" style="left:2680px;top:368px;width:624px;height:639px;border:2px solid #3a5de8;border-radius:18px;overflow:hidden"><div class="a" style="left:0;top:81px;width:620px;height:460px;background:#f7f8fc;border-top:2px solid #e7e8ee;border-bottom:2px solid #e7e8ee"></div><div class="a" style="left:0;top:147px;width:620px;height:2px;background:#e7e8ee"></div><div class="a" style="left:0;top:147px;width:208px;height:4px;background:#3a5de8"></div></div>
<svg class="a" style="left:2708px;top:400px" width="28" height="22" viewBox="0 0 28 22">
<path d="M3 5 L14 16 L25 5" fill="none" stroke="#2f3147" stroke-width="2.6"/></svg>
<div class="t med" style="left:2746px;top:390px;font-size:24px">City</div>
<div class="a" style="left:3202px;top:390px;width:80px;height:41px;background:#6aae98;border-radius:21px"></div>
<div class="a" style="left:3242px;top:396px;width:32px;height:30px;background:#fff;border-radius:50%"></div>
<div class="t med" style="left:2746px;top:465px;font-size:25px;color:#3a5de8">Values</div>
<div class="t med" style="left:2930px;top:465px;font-size:25px">Conditions</div>
<div class="t med" style="left:3151px;top:465px;font-size:25px">Settings</div>
<div class="a" style="left:2706px;top:559px;width:32px;height:32px;border:2px solid #e7e8ee;border-radius:6px;background:#f7f8fc"></div>
<div class="a" style="left:2755px;top:543px;width:523px;height:63px;border:2px solid #e7e8ee;border-radius:10px;background:#fff"></div>
<div class="t" style="left:2774px;top:555px;font-size:26px;color:#6b6d82">Search for a value</div>
<div class="a" style="left:2706px;top:631px;width:32px;height:32px;border-radius:6px;background:#2f3147"></div>
<svg class="a" style="left:2706px;top:631px" width="32" height="32" viewBox="0 0 32 32"><path d="M4.8 16 L11.7 22.4 L26.8 8" fill="none" stroke="#fff" stroke-width="3.6" stroke-linecap="round" stroke-linejoin="round"/></svg>
<div class="t" style="left:2750px;top:627px;font-size:26px">Akron</div>
<div class="a" style="left:2706px;top:683px;width:32px;height:32px;border-radius:6px;background:#2f3147"></div>
<svg class="a" style="left:2706px;top:683px" width="32" height="32" viewBox="0 0 32 32"><path d="M4.8 16 L11.7 22.4 L26.8 8" fill="none" stroke="#fff" stroke-width="3.6" stroke-linecap="round" stroke-linejoin="round"/></svg>
<div class="t" style="left:2750px;top:679px;font-size:26px">Aberdeen</div>
<div class="a" style="left:2706px;top:735px;width:32px;height:32px;border:2px solid #e7e8ee;border-radius:6px"></div>
<div class="t" style="left:2750px;top:731px;font-size:26px">Abilene</div>
<div class="a" style="left:2706px;top:788px;width:32px;height:32px;border:2px solid #e7e8ee;border-radius:6px"></div>
<div class="t" style="left:2750px;top:784px;font-size:26px">Albuquerque</div>
<div class="a" style="left:2706px;top:840px;width:32px;height:32px;border:2px solid #e7e8ee;border-radius:6px"></div>
<div class="t" style="left:2750px;top:836px;font-size:26px">Alexandria</div>
<div class="a" style="left:3284px;top:636px;width:8px;height:24px;background:#d7dcf5;border-radius:4px"></div>
<div class="a" style="left:2633px;top:608px;width:248px;height:148px;border:4px solid #e4432f"></div>
<svg class="a" style="left:2695px;top:930px" width="46" height="52" viewBox="2695 930 46 52">
<path d="M2701.5 945 H2734" fill="none" stroke="#a6a9bf" stroke-width="3.2" stroke-linecap="round"/>
<path d="M2710 945 L2712 939.5 Q2713 938.5 2714.5 938.5 H2722.5 Q2724 938.5 2725 939.5 L2727 945" fill="none" stroke="#a6a9bf" stroke-width="3"/>
<path d="M2704.6 946 V971.5 a4 4 0 0 0 4 4 H2727.8 a4 4 0 0 0 4 -4 V946" fill="none" stroke="#a6a9bf" stroke-width="3.2"/>
<path d="M2711.7 952 V968.5 M2717.8 952 V968.5 M2724 952 V968.5" stroke="#a6a9bf" stroke-width="2.5" stroke-linecap="round"/></svg>
<svg class="a" style="left:3105px;top:925px" width="60" height="60" viewBox="3105 925 60 60">
<path d="M3143.3 968.2 A15.9 15.9 0 1 1 3143.6 945.6" fill="none" stroke="#a6a9bf" stroke-width="3.2" stroke-linecap="round"/>
<path d="M3150 942.2 L3150 953 L3139.4 953 Z" fill="#a6a9bf" stroke="#a6a9bf" stroke-width="1.8" stroke-linejoin="round"/></svg>
<div class="a" style="left:3177px;top:925px;width:109px;height:64px;border:2px solid #86a0f0;border-radius:10px"></div>
<div class="t med" style="left:3199px;top:937px;font-size:26px;color:#8aa3f1">Apply</div>
</body></html>
